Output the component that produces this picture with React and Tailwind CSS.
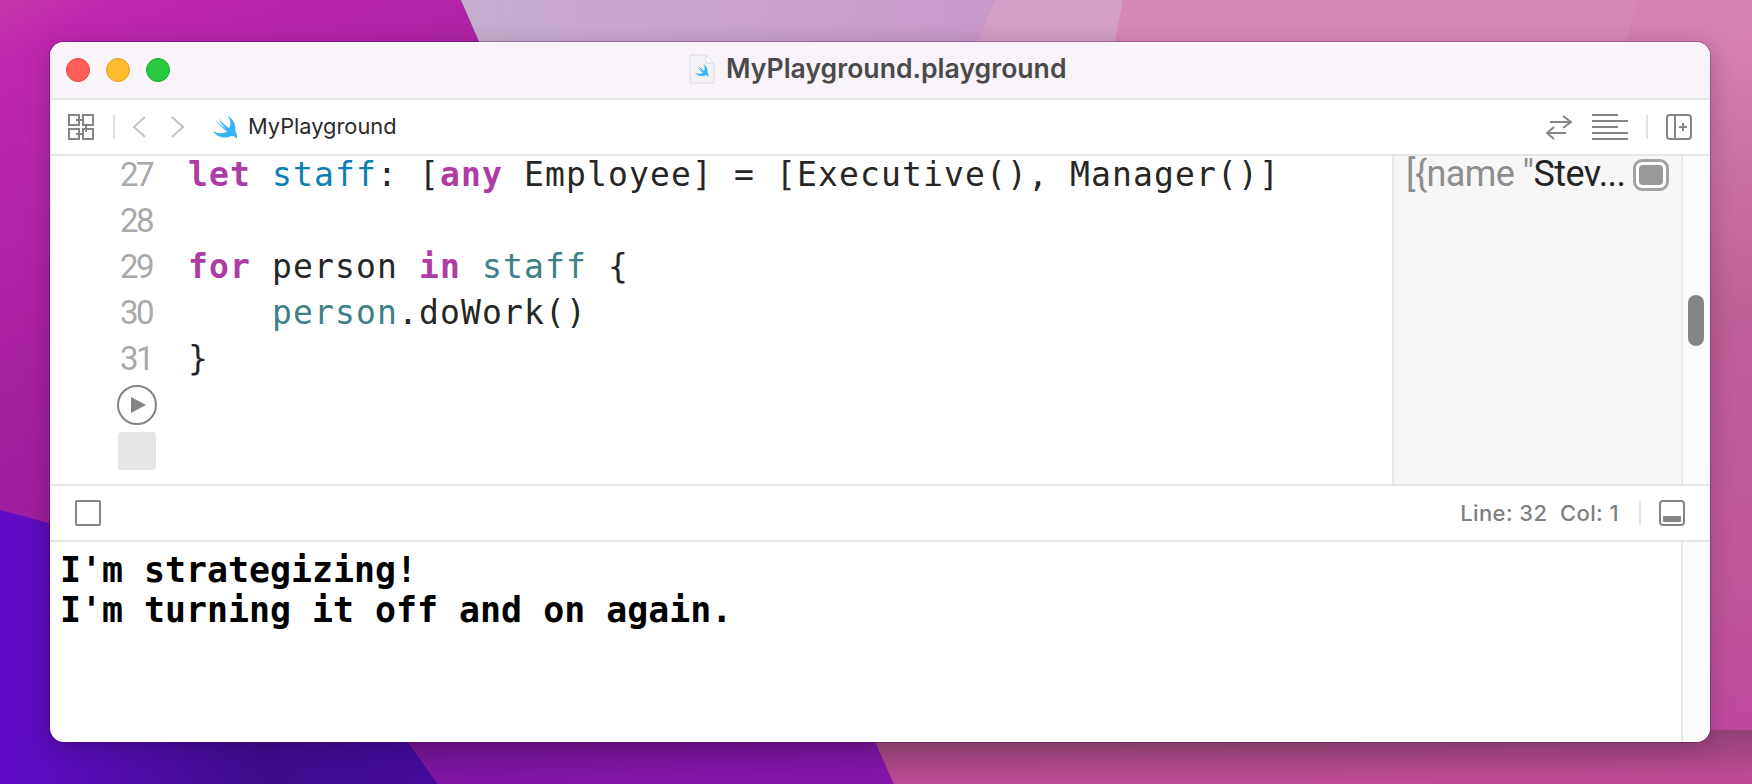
const swiftPath = 'M5 50C21 60 38 58 48 52 36 44 22 30 12 16 24 29 38 40 46 44 36 36 28 26 22 12 32 25 44 36 54 42 60 30 58 18 50 5 65 15 75 31 72 50 76 56 78 64 77 75 72 66 64 64 58 66 42 74 20 70 5 50Z'

function SwiftIcon({ className }) {
  return (
    <svg viewBox="0 0 80 80" className={className}>
      <path d={swiftPath} fill="#35b4f8" />
    </svg>
  )
}

function Wallpaper() {
  return (
    <svg viewBox="0 0 1752 784" preserveAspectRatio="none" className="absolute inset-0 h-full w-full">
      <defs>
        <linearGradient id="magenta" x1="0" y1="0" x2="0.35" y2="1">
          <stop offset="0" stopColor="#c636ab" />
          <stop offset="0.08" stopColor="#c027b0" />
          <stop offset="0.5" stopColor="#a4209f" />
          <stop offset="1" stopColor="#8f1a9c" />
        </linearGradient>
        <linearGradient id="lilac" x1="0" y1="0" x2="1" y2="0">
          <stop offset="0" stopColor="#c4b0cf" />
          <stop offset="0.25" stopColor="#cba6d0" />
          <stop offset="1" stopColor="#c998cb" />
        </linearGradient>
        <linearGradient id="pink" x1="0" y1="0" x2="0" y2="1">
          <stop offset="0" stopColor="#d984b3" />
          <stop offset="0.4" stopColor="#bf5f98" />
          <stop offset="0.75" stopColor="#c0569b" />
          <stop offset="1" stopColor="#bd44a0" />
        </linearGradient>
        <linearGradient id="indigo" gradientUnits="userSpaceOnUse" x1="0" y1="0" x2="438" y2="0">
          <stop offset="0" stopColor="#600cc6" />
          <stop offset="0.6" stopColor="#3f0c8c" />
          <stop offset="1" stopColor="#450a9c" />
        </linearGradient>
        <linearGradient id="bottomMid" x1="0" y1="0" x2="0.3" y2="1">
          <stop offset="0" stopColor="#6c1488" />
          <stop offset="1" stopColor="#8215a6" />
        </linearGradient>
        <linearGradient id="bottomRight" x1="0" y1="0" x2="0.15" y2="1">
          <stop offset="0" stopColor="#8f4274" />
          <stop offset="0.6" stopColor="#a84684" />
          <stop offset="1" stopColor="#bc4a94" />
        </linearGradient>
      </defs>
      <rect width="1752" height="784" fill="url(#pink)" />
      <polygon points="0,0 461,0 490,60 490,740 0,740" fill="url(#magenta)" />
      <polygon points="461,0 995,0 970,60 487,60" fill="url(#lilac)" />
      <polygon points="995,0 1123,0 1112,60 970,60" fill="#d39fc5" />
      <polygon points="1123,0 1638,0 1620,60 1112,60" fill="#d888b5" />
      <polygon points="0,510 60,526 60,730 400,730 438,784 0,784" fill="url(#indigo)" />
      <polygon points="400,730 870,730 894,784 438,784" fill="url(#bottomMid)" />
      <polygon points="870,730 1752,730 1752,784 894,784" fill="url(#bottomRight)" />
    </svg>
  )
}

function CodeLine({ n, children }) {
  return (
    <div className="flex h-[46px] items-center">
      <span className="w-[102px] text-right font-['Roboto',sans-serif] text-[33px] tracking-[-2.6px] text-[#a9a9a9]">{n}</span>
      <pre className="ml-[36px] font-['DejaVu_Sans_Mono',monospace] text-[33px] tracking-[1.13px] text-[#262626]">{children}</pre>
    </div>
  )
}

const kw = 'font-bold text-[#ad3da4]'
const teal = 'text-[#3e8087]'

export default function App() {
  return (
    <div className="relative flex h-[784px] w-[1752px] items-start overflow-hidden pl-[50px] pt-[42px]">
      <Wallpaper />

      <div className="relative flex h-[700px] w-[1660px] flex-col overflow-hidden rounded-[14px] bg-white shadow-[0_0_0_1px_rgba(60,0,60,0.25),0_4px_24px_rgba(0,0,0,0.22)]">
        {/* title bar */}
        <div className="relative flex h-[58px] shrink-0 items-center border-b-2 border-[#e6e5e8] bg-[#f8f4f9]">
          <div className="ml-[16px] flex gap-[16px]">
            <span className="h-[24px] w-[24px] rounded-full border border-[#e0443e] bg-[#ff5f57]" />
            <span className="h-[24px] w-[24px] rounded-full border border-[#dea123] bg-[#febc2e]" />
            <span className="h-[24px] w-[24px] rounded-full border border-[#1aab29] bg-[#28c840]" />
          </div>
          <div className="absolute left-[639px] top-[7px] flex items-center">
            <div className="relative h-[30px] w-[26px]">
              <svg viewBox="0 0 26 30" className="absolute inset-0 h-full w-full">
                <path d="M1 1h16l8 8v20H1z" fill="#f3f3f5" stroke="#dcdcdf" strokeWidth="1" />
                <path d="M17 1v8h8z" fill="#ffffff" stroke="#dcdcdf" strokeWidth="1" />
              </svg>
              <SwiftIcon className="absolute left-[5px] top-[9px] h-[15px] w-[15px]" />
            </div>
            <span className="ml-[11px] font-['Inter',sans-serif] text-[26.6px] font-semibold text-[#4a4a4a]">MyPlayground.playground</span>
          </div>
        </div>

        {/* toolbar */}
        <div className="flex h-[56px] shrink-0 items-center border-b-2 border-[#e6e6e6] pl-[18px] pr-[18px]">
          <svg viewBox="0 0 26 26" className="h-[26px] w-[26px]" fill="none" stroke="#858585" strokeWidth="2">
            <path d="M1 1h10v10H1zM15 1h10v10H15zM1 15h10v10H1zM15 15h10v10H15z" />
            <path d="M8 6h7M18 11v7M8 20h7" stroke="#858585" />
          </svg>
          <span className="ml-[19px] h-[24px] w-[2px] bg-[#e3e3e3]" />
          <svg viewBox="0 0 14 22" className="ml-[17px] h-[22px] w-[14px]" fill="none" stroke="#c2c2c2" strokeWidth="2">
            <path d="M13 1L2 11l11 10" />
          </svg>
          <svg viewBox="0 0 14 22" className="ml-[25px] h-[22px] w-[14px]" fill="none" stroke="#c2c2c2" strokeWidth="2">
            <path d="M1 1l11 10L1 21" />
          </svg>
          <SwiftIcon className="ml-[26px] h-[27px] w-[27px]" />
          <span className="mb-[2px] ml-[10px] font-['Inter',sans-serif] text-[21.8px] text-[#2b2b2b]">MyPlayground</span>
          <div className="ml-auto flex items-center">
            <svg viewBox="0 0 26 25" className="h-[25px] w-[26px]" fill="none" stroke="#858585" strokeWidth="2">
              <path d="M4 7h21M17 1l8 6-8 6M20 18H1M8 12l-7 6 7 6" />
            </svg>
            <svg viewBox="0 0 36 26" className="ml-[20px] h-[26px] w-[36px]" fill="none" stroke="#858585" strokeWidth="2">
              <path d="M0 1h26M0 7h36M0 13h26M0 19h36M0 25h36" />
            </svg>
            <span className="ml-[18px] h-[24px] w-[2px] bg-[#e3e3e3]" />
            <svg viewBox="0 0 26 26" className="ml-[18px] h-[26px] w-[26px]" fill="none" stroke="#858585" strokeWidth="2">
              <rect x="1" y="1" width="24" height="24" rx="3" />
              <path d="M9 1v24M13 13h8M17 9v8" />
            </svg>
          </div>
        </div>

        {/* editor */}
        <div className="flex h-[330px] shrink-0 border-b-2 border-[#e6e6e6]">
          <div className="-mt-[4px] min-w-0 flex-1">
            <CodeLine n="27">
              <span className={kw}>let</span> <span className="text-[#0b7fb0]">staff</span>: [<span className={kw}>any</span> Employee] = [Executive(), Manager()]
            </CodeLine>
            <CodeLine n="28">{''}</CodeLine>
            <CodeLine n="29">
              <span className={kw}>for</span> person <span className={kw}>in</span> <span className={teal}>staff</span> {'{'}
            </CodeLine>
            <CodeLine n="30">
              {'    '}<span className={teal}>person</span>.doWork()
            </CodeLine>
            <CodeLine n="31">{'}'}</CodeLine>
            <div className="ml-[67px] mt-[3px] flex h-[40px] w-[40px] items-center justify-center rounded-full border-2 border-[#848484]">
              <svg viewBox="0 0 16 16" className="ml-[1px] h-[16px] w-[16px]">
                <path d="M1 0l15 8-15 8z" fill="#848484" />
              </svg>
            </div>
            <div className="ml-[68px] mt-[7px] h-[38px] w-[38px] rounded-[3px] bg-[#e5e5e5]" />
          </div>
          <div className="flex w-[291px] shrink-0 items-start justify-between border-x-2 border-[#e9e9e9] bg-[#f7f7f7] pl-[12px] pr-[12px]">
            <span className="whitespace-nowrap font-['Roboto',sans-serif] text-[36px] leading-[36px] tracking-[-0.6px] text-[#8e8e8e]">
              [{'{'}name "<span className="text-[#242424]">Stev...</span>
            </span>
            <span className="mt-[3px] flex h-[32px] w-[36px] shrink-0 rounded-[9px] border-[3px] border-[#a2a2a2] bg-white p-[3px]">
              <span className="flex-1 rounded-[4px] bg-[#999999]" />
            </span>
          </div>
          <div className="relative w-[27px] shrink-0 bg-[#fbfbfb]">
            <div className="absolute left-[5px] top-[139px] h-[51px] w-[16px] rounded-full bg-[#848484]" />
          </div>
        </div>

        {/* status bar */}
        <div className="flex h-[56px] shrink-0 items-center border-b-2 border-[#e6e6e6] pl-[25px] pr-[25px]">
          <span className="h-[26px] w-[26px] rounded-[2px] border-2 border-[#858585]" />
          <span className="ml-auto whitespace-pre font-['Inter',sans-serif] text-[22px] font-medium tracking-[0.4px] text-[#808080]">Line: 32  Col: 1</span>
          <span className="ml-[20px] h-[24px] w-[2px] bg-[#e9e9e9]" />
          <span className="ml-[18px] flex h-[26px] w-[26px] items-end rounded-[4px] border-2 border-[#858585] p-[2px]">
            <span className="h-[6px] flex-1 rounded-[1px] bg-[#858585]" />
          </span>
        </div>

        {/* console */}
        <div className="flex min-h-0 flex-1">
          <pre className="flex-1 pl-[10px] pt-[8px] font-['DejaVu_Sans_Mono',monospace] text-[34.9px] font-bold leading-[40px] text-black">
            I'm strategizing!{'\n'}I'm turning it off and on again.
          </pre>
          <div className="w-[29px] shrink-0 border-l-2 border-[#e9e9e9] bg-[#fbfbfb]" />
        </div>
      </div>
    </div>
  )
}
